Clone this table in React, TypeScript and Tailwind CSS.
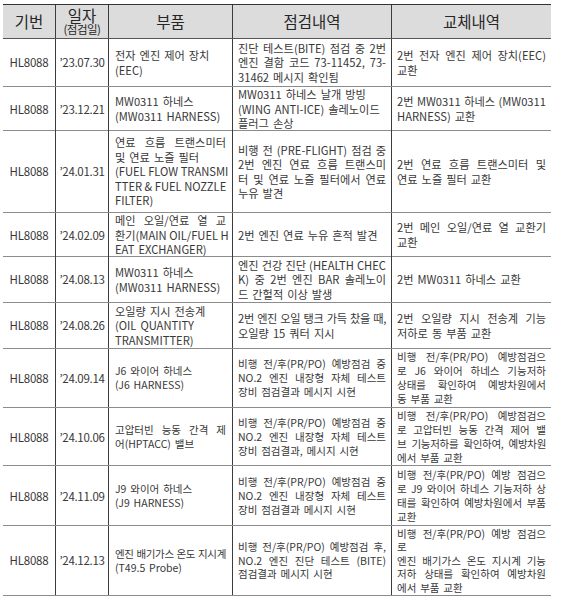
import React from "react";

type Row = { date: string; h: string; sz: string; part: string[]; check: string[]; rep: string[] };

const A = "text-[11.2px] leading-[14.5px]";
const B = "text-[10.5px] leading-[14px]";
const C = "text-[10.5px] leading-[13.5px]";

const rows: Row[] = [
  {
    date: "’23.07.30",
    h: "h-[48px]",
    sz: A,
    part: ["전자 엔진 제어 장치", "(EEC)"],
    check: ["^진단 테스트(BITE) 점검 중 2번", "^엔진 결함 코드 73-11452, 73-", "31462 메시지 확인됨"],
    rep: ["^2번 전자 엔진 제어 장치(EEC)", "교환"],
  },
  {
    date: "’23.12.21",
    h: "h-[44px]",
    sz: A,
    part: ["MW0311 하네스", "(MW0311 HARNESS)"],
    check: ["MW0311 하네스 날개 방빙", "(WING ANTI-ICE) 솔레노이드", "플러그 손상"],
    rep: ["^2번 MW0311 하네스 (MW0311", "HARNESS) 교환"],
  },
  {
    date: "’24.01.31",
    h: "h-[82px]",
    sz: A,
    part: ["^연료 흐름 트랜스미터", "및 연료 노즐 필터", "^(FUEL FLOW TRANSMI", "^TTER & FUEL NOZZLE", "FILTER)"],
    check: ["^비행 전 (PRE-FLIGHT) 점검 중", "^2번 엔진 연료 흐름 트랜스미", "^터 및 연료 노즐 필터에서 연료", "누유 발견"],
    rep: ["^2번 연료 흐름 트랜스미터 및", "연료 노즐 필터 교환"],
  },
  {
    date: "’24.02.09",
    h: "h-[44px]",
    sz: A,
    part: ["^메인 오일/연료 열 교", "^환기(MAIN OIL/FUEL H", "EAT EXCHANGER)"],
    check: ["2번 엔진 연료 누유 흔적 발견"],
    rep: ["^2번 메인 오일/연료 열 교환기", "교환"],
  },
  {
    date: "’24.08.13",
    h: "h-[46px]",
    sz: A,
    part: ["MW0311 하네스", "(MW0311 HARNESS)"],
    check: ["^엔진 건강 진단 (HEALTH CHEC", "^K) 중 2번 엔진 BAR 솔레노이", "드 간헐적 이상 발생"],
    rep: ["2번 MW0311 하네스 교환"],
  },
  {
    date: "’24.08.26",
    h: "h-[46px]",
    sz: A,
    part: ["오일량 지시 전송계", "(OIL QUANTITY", "TRANSMITTER)"],
    check: ["!2번 엔진 오일 탱크 가득 찼을 때,", "오일량 15 쿼터 지시"],
    rep: ["^2번 오일량 지시 전송계 기능", "저하로 동 부품 교환"],
  },
  {
    date: "’24.09.14",
    h: "h-[59px]",
    sz: B,
    part: ["J6 와이어 하네스", "(J6 HARNESS)"],
    check: ["^비행 전/후(PR/PO) 예방점검 중", "^NO.2 엔진 내장형 자체 테스트", "장비 점검결과 메시지 시현"],
    rep: ["^비행 전/후(PR/PO) 예방점검으", "^로 J6 와이어 하네스 기능저하", "^상태를 확인하여 예방차원에서", "동 부품 교환"],
  },
  {
    date: "’24.10.06",
    h: "h-[58px]",
    sz: B,
    part: ["^고압터빈 능동 간격 제", "어(HPTACC) 밸브"],
    check: ["^비행 전/후(PR/PO) 예방점검 중", "^NO.2 엔진 내장형 자체 테스트", "장비 점검결과, 메시지 시현"],
    rep: ["^비행 전/후(PR/PO) 예방점검으", "^로 고압터빈 능동 간격 제어 밸", "!브 기능저하를 확인하여, 예방차원", "에서 부품 교환"],
  },
  {
    date: "’24.11.09",
    h: "h-[60px]",
    sz: B,
    part: ["J9 와이어 하네스", "(J9 HARNESS)"],
    check: ["^비행 전/후(PR/PO) 예방점검 중", "^NO.2 엔진 내장형 자체 테스트", "장비 점검결과 메시지 시현"],
    rep: ["^비행 전/후(PR/PO) 예방 점검으", "^로 J9 와이어 하네스 기능저하 상", "^태를 확인하여 예방차원에서 부품", "교환"],
  },
  {
    date: "’24.12.13",
    h: "h-[70px]",
    sz: C,
    part: ["!엔진 배기가스 온도 지시계", "(T49.5 Probe)"],
    check: ["^비행 전/후(PR/PO) 예방점검 후,", "^NO.2 엔진 진단 테스트 (BITE)", "점검결과 메시지 시현"],
    rep: ["^비행 전/후(PR/PO) 예방 점검으", "로", "^엔진 배기가스 온도 지시계 기능", "^저하 상태를 확인하여 예방차원", "에서 부품 교환"],
  },
];

function Lines({ lines, pad }: { lines: string[]; pad: string }) {
  return (
    <div className={`flex flex-col justify-center border-l border-[#3c3c3c] ${pad}`}>
      {lines.map((l, i) => {
        const full = l.startsWith("^");
        const tight = l.startsWith("!");
        const t = full || tight ? l.slice(1) : l;
        let cls = "whitespace-nowrap [word-spacing:1.5px]";
        if (full) cls = "whitespace-nowrap text-justify [text-align-last:justify]";
        if (tight) cls = "whitespace-nowrap text-justify [text-align-last:justify] tracking-[-0.3px]";
        return (
          <div key={i} className={cls}>
            {t}
          </div>
        );
      })}
    </div>
  );
}

export default function App() {
  return (
    <div
      className="w-[566px] h-[605px] bg-white pt-[4px] pl-[3px] text-[#383838]"
      style={{ fontFamily: '"Noto Sans CJK KR", "Noto Sans", sans-serif' }}
    >
      <div className="w-[548px] border-t border-[#333]">
        <div className="grid grid-cols-[52px_53px_124px_159px_160px] h-[34px] bg-[#dcdcdc] border-b border-[#555] text-[15.5px] leading-[17px] text-[#262626]">
          <div className="flex items-center justify-center">기번</div>
          <div className="flex flex-col items-center justify-center border-l border-[#3c3c3c]">
            <div className="leading-[14px]">일자</div>
            <div className="text-[11.5px] leading-[13px] tracking-[-0.5px] pt-[1px]">(점검일)</div>
          </div>
          <div className="flex items-center justify-center border-l border-[#3c3c3c]">부품</div>
          <div className="flex items-center justify-center border-l border-[#3c3c3c]">점검내역</div>
          <div className="flex items-center justify-center border-l border-[#3c3c3c]">교체내역</div>
        </div>
        {rows.map((r, i) => (
          <div
            key={i}
            className={`grid grid-cols-[52px_53px_124px_159px_160px] border-b border-[#8c8c8c] ${r.h} ${r.sz}`}
          >
            <div className="flex items-center justify-center text-[11.5px] tracking-[-0.2px]">HL8088</div>
            <div className="flex items-center justify-center border-l border-[#3c3c3c] text-[11.5px] tracking-[-0.3px]">
              {r.date}
            </div>
            <Lines lines={r.part} pad="px-[6px]" />
            <Lines lines={r.check} pad="px-[5px]" />
            <Lines lines={r.rep} pad="px-[5px]" />
          </div>
        ))}
      </div>
    </div>
  );
}
